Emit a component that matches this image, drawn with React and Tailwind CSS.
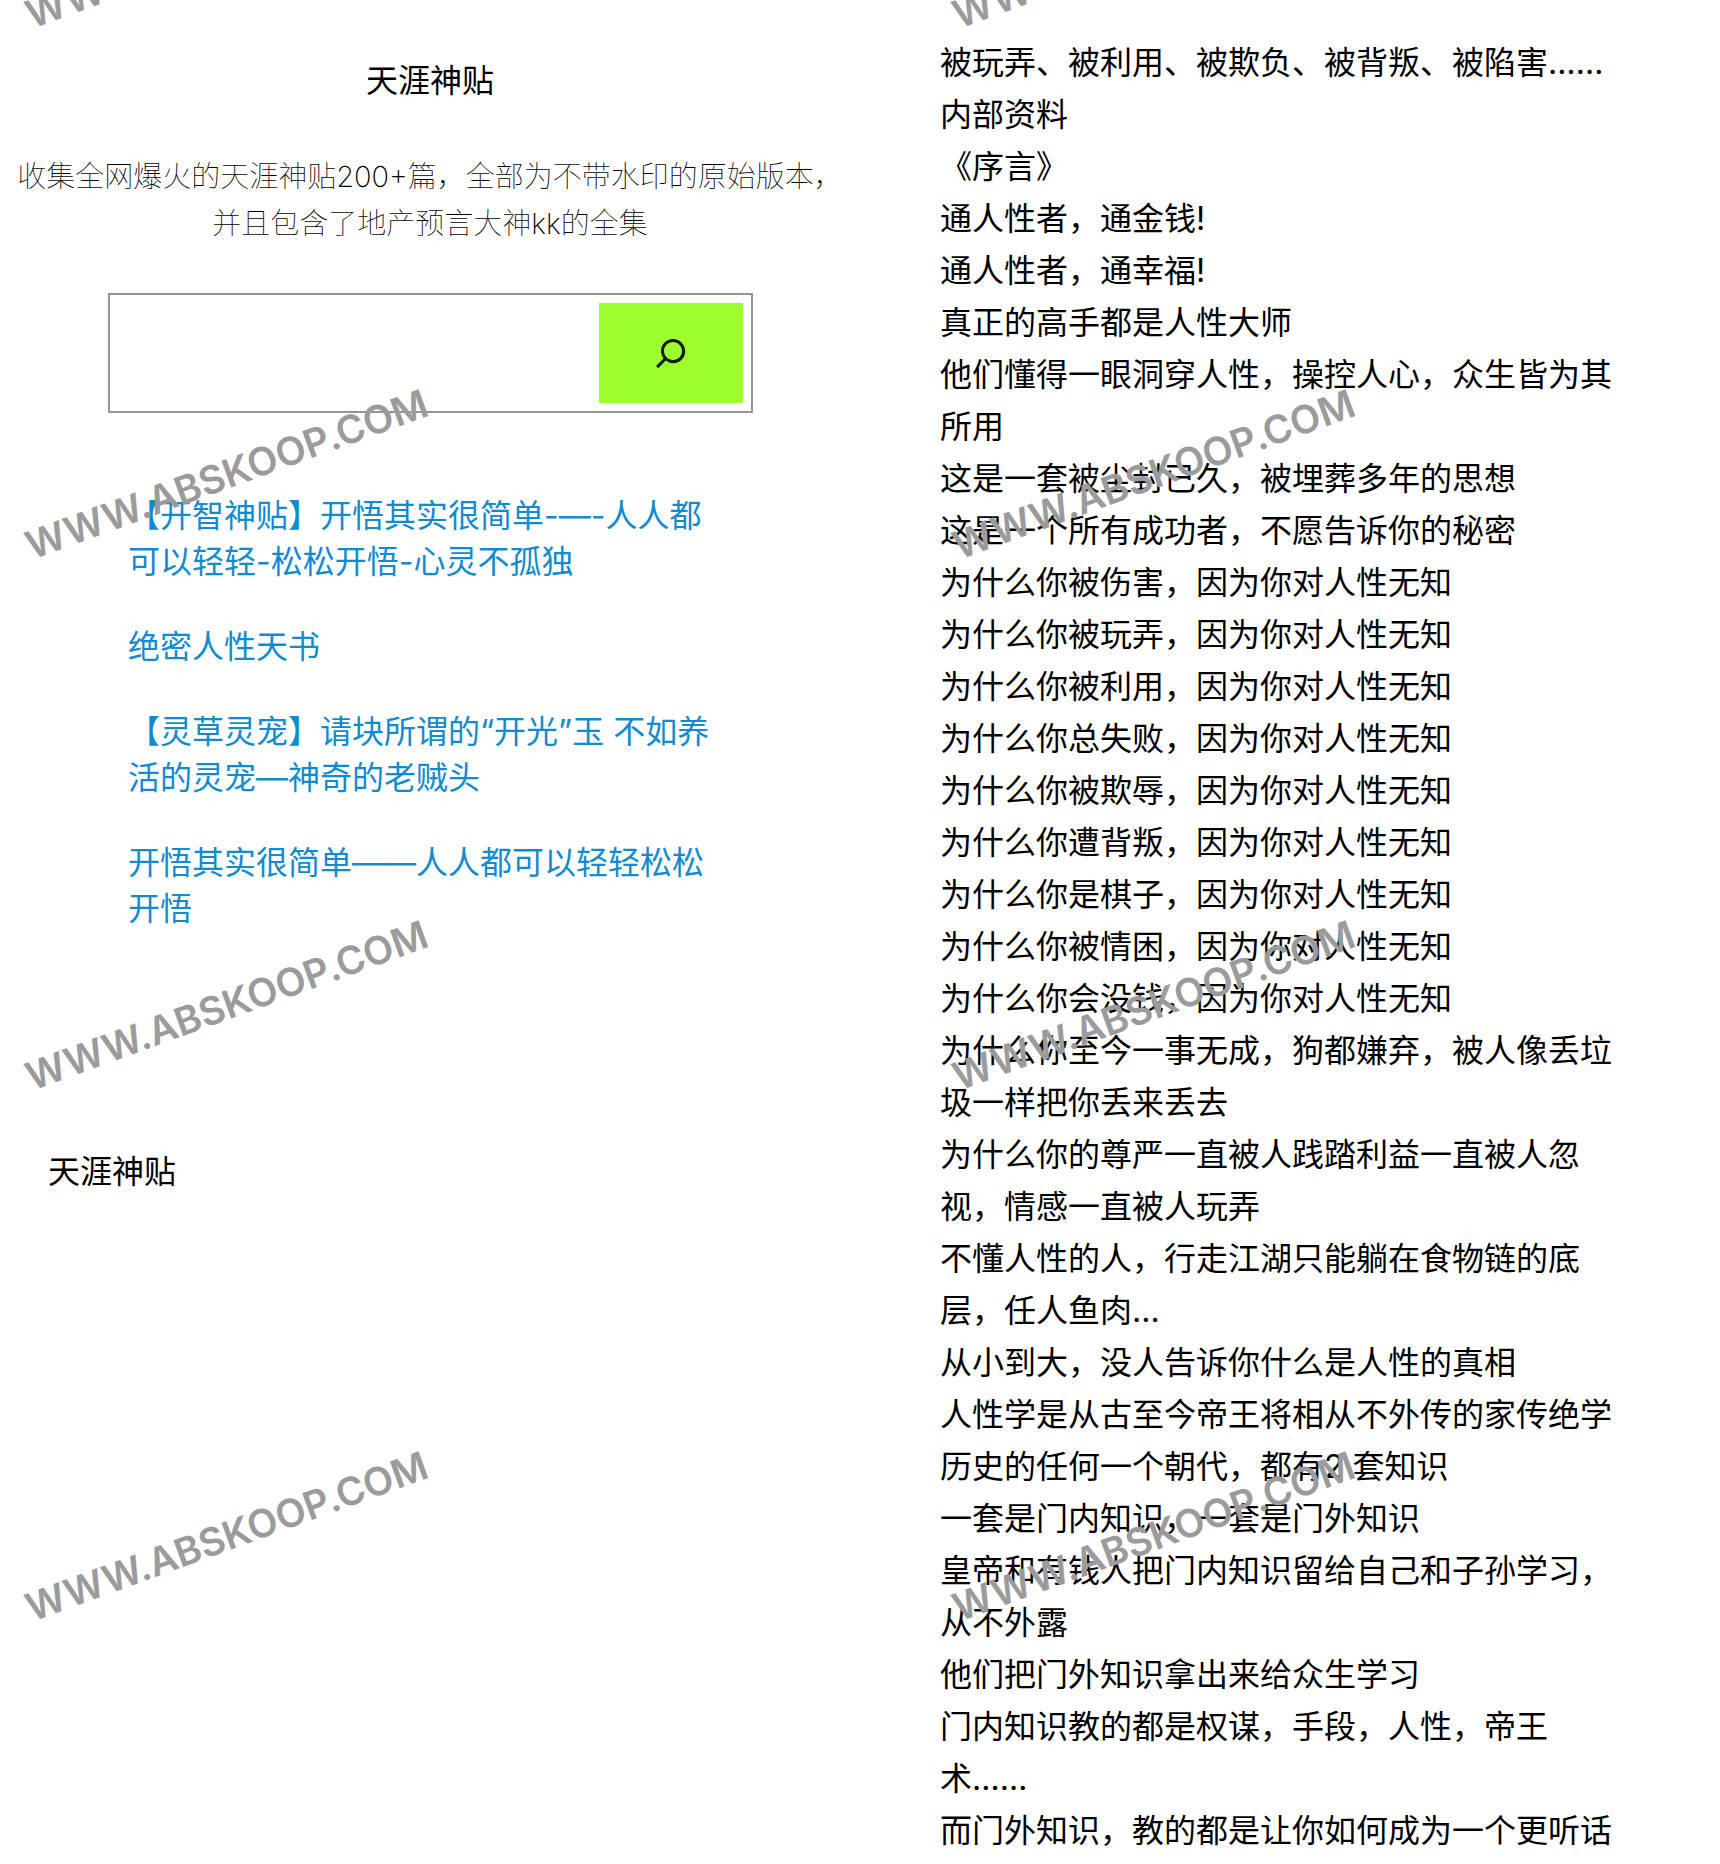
import React, { useState } from 'react';

const links = [
    '【开智神贴】开悟其实很简单-—-人人都可以轻轻-松松开悟-心灵不孤独',
    '绝密人性天书',
    '【灵草灵宠】请块所谓的“开光”玉 不如养活的灵宠—神奇的老贼头',
    '开悟其实很简单——人人都可以轻轻松松开悟',
];

const article = [
    '被玩弄、被利用、被欺负、被背叛、被陷害……',
    '内部资料',
    '《序言》',
    '通人性者，通金钱!',
    '通人性者，通幸福!',
    '真正的高手都是人性大师',
    '他们懂得一眼洞穿人性，操控人心，众生皆为其所用',
    '这是一套被尘封已久，被埋葬多年的思想',
    '这是一个所有成功者，不愿告诉你的秘密',
    '为什么你被伤害，因为你对人性无知',
    '为什么你被玩弄，因为你对人性无知',
    '为什么你被利用，因为你对人性无知',
    '为什么你总失败，因为你对人性无知',
    '为什么你被欺辱，因为你对人性无知',
    '为什么你遭背叛，因为你对人性无知',
    '为什么你是棋子，因为你对人性无知',
    '为什么你被情困，因为你对人性无知',
    '为什么你会没钱，因为你对人性无知',
    '为什么你至今一事无成，狗都嫌弃，被人像丢垃圾一样把你丢来丢去',
    '为什么你的尊严一直被人践踏利益一直被人忽视，情感一直被人玩弄',
    '不懂人性的人，行走江湖只能躺在食物链的底层，任人鱼肉...',
    '从小到大，没人告诉你什么是人性的真相',
    '人性学是从古至今帝王将相从不外传的家传绝学',
    '历史的任何一个朝代，都有2 套知识',
    '一套是门内知识，一套是门外知识',
    '皇帝和有钱人把门内知识留给自己和子孙学习，从不外露',
    '他们把门外知识拿出来给众生学习',
    '门内知识教的都是权谋，手段，人性，帝王术……',
    '而门外知识，教的都是让你如何成为一个更听话',
];

function SearchForm() {
    const [query, setQuery] = useState('');

    return (
        <form
            onSubmit={(e) => e.preventDefault()}
            className="mx-auto mt-[46px] flex h-[120px] w-3/4 border-2 border-[#949494] p-2"
        >
            <input
                type="search"
                aria-label="搜索"
                value={query}
                onChange={(e) => setQuery(e.target.value)}
                className="min-w-0 flex-1 px-2 outline-none"
            />
            <button type="submit" aria-label="搜索" className="flex w-36 items-center justify-center bg-[#9eff2e]">
                <svg viewBox="0 0 24 24" className="size-12" fill="#0b1a04">
                    <path d="M13 5c-3.3 0-6 2.7-6 6 0 1.4.5 2.7 1.3 3.7l-3.8 3.8 1.1 1.1 3.8-3.8c1 .8 2.3 1.3 3.7 1.3 3.3 0 6-2.7 6-6S16.3 5 13 5zm0 10.5c-2.5 0-4.5-2-4.5-4.5s2-4.5 4.5-4.5 4.5 2 4.5 4.5-2 4.5-4.5 4.5z" />
                </svg>
            </button>
        </form>
    );
}

function Watermarks() {
    return (
        <div aria-hidden="true" className="pointer-events-none absolute inset-0 overflow-hidden">
            <div className="-mt-[502px] grid auto-rows-[531px] grid-cols-[927px_927px] items-end pl-8">
                {Array.from({ length: 8 }, (_, i) => (
                    <span
                        key={i}
                        className="origin-bottom-left -rotate-20 text-[39px] leading-7 font-semibold text-[#9b9b9b]"
                    >
                        WWW.ABSKOOP.COM
                    </span>
                ))}
            </div>
        </div>
    );
}

export default function App() {
    return (
        <div className="relative grid min-h-screen grid-cols-2 overflow-hidden bg-white font-['Inter','Noto_Sans_CJK_SC',sans-serif] text-[32px] text-black">
            <main>
                <h1 className="pt-[55px] text-center leading-[52px]">天涯神贴</h1>
                <p className="mt-[46px] px-2 text-center text-[29px] leading-[47px] font-thin">
                    收集全网爆火的天涯神贴<span className="font-extralight">200+</span>篇，全部为不带水印的原始版本，并且包含了地产预言大神
                    <span className="font-extralight">kk</span>的全集
                </p>
                <SearchForm />
                <ul className="mx-auto mt-20 w-[604px] space-y-[39px] leading-[46px] text-[#128acd]">
                    {links.map((title) => (
                        <li key={title}>
                            <a href="#">{title}</a>
                        </li>
                    ))}
                </ul>
                <footer className="mt-[214px] pl-12 leading-[52px]">天涯神贴</footer>
            </main>
            <article className="pt-[37px] pr-24 pl-20 leading-[52px]">
                {article.map((line) => (
                    <p key={line}>{line}</p>
                ))}
            </article>
            <Watermarks />
        </div>
    );
}
